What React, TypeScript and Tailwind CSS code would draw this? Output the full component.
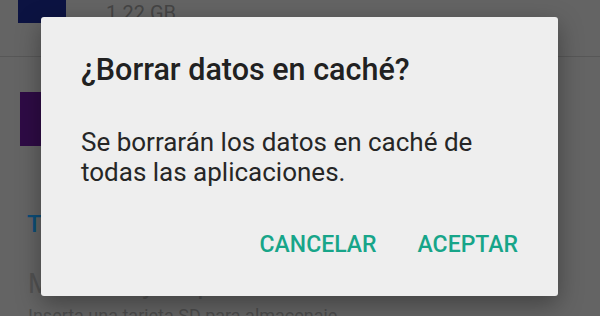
export default function App() {
  return (
    <div className="relative h-[316px] w-[600px] overflow-hidden bg-[#646464] font-['Roboto',sans-serif]">
      {/* dimmed settings page behind the dialog */}
      <div className="flex flex-col">
        <div className="flex h-[57px] items-start gap-[40px] border-b border-[#575757] pl-[18px]">
          <div className="h-[23px] w-[48px] bg-[#0c1342]" />
          <span className="pt-[1px] text-[20px] leading-[24px] text-[#454545]">1.22 GB</span>
        </div>
        <div className="ml-[20px] mt-[35px] h-[54px] w-[54px] bg-[#2e0b45]" />
        <div className="ml-[27px] mt-[64px] text-[24px] font-medium leading-[28px] text-[#0c4d78]">Tarjeta SD</div>
        <div className="ml-[28px] mt-[30px] text-[27px] leading-[32px] text-[#525252]">Memoria y dispositivos</div>
        <div className="ml-[28px] mt-[5px] text-[18px] leading-[22px] text-[#4c4c4c]">Inserta una tarjeta SD para almacenaje</div>
      </div>

      {/* dialog */}
      <div className="absolute left-[41px] top-[17px] flex h-[279px] w-[517px] flex-col rounded-[3px] bg-[#eeeeee] pl-[40px] pr-[40px] pt-[35px] shadow-[0_8px_24px_rgba(0,0,0,0.35)]">
        <h1 className="text-[30.5px] font-medium leading-[36px] text-[#212121]">¿Borrar datos en caché?</h1>
        <p className="mt-[39px] text-[26px] leading-[30px] text-[#262626]">
          Se borrarán los datos en caché de
          <br />
          todas las aplicaciones.
        </p>
        <div className="mt-auto mb-[38px] flex justify-end gap-[41px]">
          <button className="text-[23px] font-medium leading-[27px] text-[#17a589]">CANCELAR</button>
          <button className="text-[23px] font-medium leading-[27px] text-[#17a589]">ACEPTAR</button>
        </div>
      </div>
    </div>
  )
}
